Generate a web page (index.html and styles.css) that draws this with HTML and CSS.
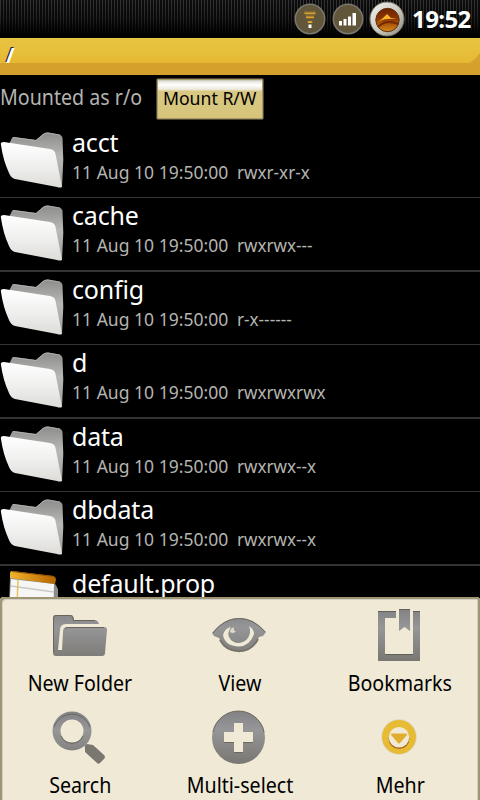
FILE: index.html
```
<!DOCTYPE html>
<html lang="en">
<head>
  <meta charset="UTF-8">
  <title>File Explorer</title>
  <meta name="viewport" content="width=device-width, initial-scale=1.0">
  <link rel="stylesheet" href="styles.css">
</head>
<body>
  <!-- shared icons and gradients -->
  <svg class="defs" width="0" height="0" aria-hidden="true">
    <defs>
      <linearGradient id="front" x1="0" y1="0" x2="0" y2="1">
        <stop offset="0" stop-color="#ffffff"/>
        <stop offset="0.5" stop-color="#f0f0ef"/>
        <stop offset="1" stop-color="#dddcd8"/>
      </linearGradient>
      <linearGradient id="back" x1="0" y1="0" x2="0" y2="1">
        <stop offset="0" stop-color="#8c8c8a"/>
        <stop offset="0.45" stop-color="#b8b8b5"/>
        <stop offset="1" stop-color="#a09f9a"/>
      </linearGradient>
      <linearGradient id="grey" gradientUnits="userSpaceOnUse" x1="0" y1="0" x2="0" y2="56">
        <stop offset="0" stop-color="#818183"/>
        <stop offset="0.35" stop-color="#969698"/>
        <stop offset="1" stop-color="#77756f"/>
      </linearGradient>
      <linearGradient id="orange" x1="0" y1="0" x2="1" y2="0">
        <stop offset="0" stop-color="#f2b42c"/>
        <stop offset="1" stop-color="#b56500"/>
      </linearGradient>
      <linearGradient id="silver" x1="0" y1="0" x2="1" y2="1">
        <stop offset="0" stop-color="#f4f4f2"/>
        <stop offset="0.55" stop-color="#cbc7bd"/>
        <stop offset="1" stop-color="#8b8678"/>
      </linearGradient>
      <linearGradient id="amber" x1="0" y1="0" x2="0" y2="1">
        <stop offset="0" stop-color="#6e2200"/>
        <stop offset="0.45" stop-color="#8c3500"/>
        <stop offset="1" stop-color="#d98a18"/>
      </linearGradient>
      <symbol id="folder" viewBox="0 0 64 64">
        <path d="M9 18L12 12Q12 11 14 11L36 14L43 8Q45 6 48 6.500L59 8.500Q62 9 62.500 12L63.300 34L62 61L20 50Z" fill="url(#back)"/>
        <path d="M13 11.500L36 14.500L43 8.500Q45 7 48 7L60 9" fill="none" stroke="#b5b5b3" stroke-width="0.800"/>
        <path d="M1 19Q0 16 4 16L50 23Q55 24 55.500 28L62 61Q60 62 57 61L15 53Q11 52 9 47Q3 34 1 19Z" fill="url(#front)"/>
      </symbol>
    </defs>
  </svg>

  <header class="statusbar">
    <svg class="wifi" width="32" height="32" viewBox="0 0 32 32">
      <circle cx="16" cy="16" r="14.700" fill="#61553a" stroke="#79776e" stroke-width="1.500"/>
      <path d="M10.500 10.300H21.500M12 14.300H20M13.700 19H18.300" fill="none" stroke="#d9a02e" stroke-width="2"/>
      <path d="M10.500 9H21.500M12 13H20" fill="none" stroke="#9c7a35"/>
      <rect x="14.500" y="21.500" width="3" height="3.500" fill="#fff"/>
    </svg>
    <svg class="signal" width="32" height="32" viewBox="0 0 32 32">
      <circle cx="16" cy="16" r="14.700" fill="#61553a" stroke="#79776e" stroke-width="1.500"/>
      <path d="M7 22.500V18H10V22.500ZM11.500 22.500V16H14.500V22.500ZM16 22.500V13.500H19V22.500ZM20.500 22.500V10H24V22.500Z" fill="#fff"/>
    </svg>
    <svg class="battery" width="36" height="36" viewBox="0 0 36 36">
      <circle cx="18" cy="18" r="17" fill="url(#silver)" stroke="#77746b"/>
      <circle cx="18.500" cy="19" r="11.700" fill="url(#amber)" stroke="#5c3415"/>
      <path d="M8 22L14 17L18 13L22 17H28Q23 18 19 18Q13 18 8 22Z" fill="#fbb52a"/>
      <path d="M9 26Q17 18 29 23" fill="none" stroke="#732a00" stroke-width="2"/>
    </svg>
    <span class="clock">19:52</span>
  </header>

  <div class="pathbar">
    <span class="path">/</span>
    <svg width="14" height="37" viewBox="0 0 14 37"><path d="M0 26Q8 24 14 15V37H0Z" fill="#d6a02d"/></svg>
  </div>

  <div class="mount">
    <span class="mount-state">Mounted as r/o</span>
    <button class="mount-button"><span>Mount R/W</span></button>
  </div>

  <ul class="files">
    <li>
      <svg class="icon"><use href="#folder"/></svg>
      <div><div class="name">acct</div><div class="info"><span class="date">11 Aug 10 19:50:00</span><span class="perms">rwxr-xr-x</span></div></div>
    </li>
    <li>
      <svg class="icon"><use href="#folder"/></svg>
      <div><div class="name">cache</div><div class="info"><span class="date">11 Aug 10 19:50:00</span><span class="perms">rwxrwx---</span></div></div>
    </li>
    <li>
      <svg class="icon"><use href="#folder"/></svg>
      <div><div class="name">config</div><div class="info"><span class="date">11 Aug 10 19:50:00</span><span class="perms">r-x------</span></div></div>
    </li>
    <li>
      <svg class="icon"><use href="#folder"/></svg>
      <div><div class="name">d</div><div class="info"><span class="date">11 Aug 10 19:50:00</span><span class="perms">rwxrwxrwx</span></div></div>
    </li>
    <li>
      <svg class="icon"><use href="#folder"/></svg>
      <div><div class="name">data</div><div class="info"><span class="date">11 Aug 10 19:50:00</span><span class="perms">rwxrwx--x</span></div></div>
    </li>
    <li>
      <svg class="icon"><use href="#folder"/></svg>
      <div><div class="name">dbdata</div><div class="info"><span class="date">11 Aug 10 19:50:00</span><span class="perms">rwxrwx--x</span></div></div>
    </li>
    <li>
      <svg class="icon" viewBox="0 0 64 64">
        <path d="M10 10L54 15L58 22V64H8Z" fill="#8b8b89"/>
        <path d="M11 12L54 17L53 64H8Z" fill="#f6f6f4"/>
        <path d="M12 4L53 9Q56 10 56 13L55 17L10 11V7Q10 4 12 4Z" fill="url(#orange)"/>
        <path d="M12 4.500L54 9.500" stroke="#9a5600"/>
        <path d="M11 19L54 25" stroke="#c9c9c9" stroke-width="1.300"/>
        <path d="M18 13L16 64" stroke="#e8c35c" stroke-width="1.500"/>
      </svg>
      <div><div class="name">default.prop</div></div>
    </li>
  </ul>

  <nav class="menu">
    <a class="item">
      <svg width="56" height="56" viewBox="0 0 56 56">
        <path d="M1 10Q1 7 3 7H19Q21 7 21.500 9L22 12H43Q46 12.500 47 16H14Q8 16 8 22L6 42H10L11 24Q11 19 15 19H52Q55 19 55 22L53 45Q53 48 50 48H4Q1 48 1 45Z" fill="url(#grey)"/>
        <path d="M1.500 44V10Q2 7.500 4 7.500H19Q21 8 21.500 12.500H43M13 21Q14 19.500 16 19.500H52" fill="none" stroke="#69655c"/>
      </svg>
      <span>New Folder</span>
    </a>
    <a class="item">
      <svg width="56" height="56" viewBox="0 0 56 56">
        <path d="M0 25Q12 10 27 10Q42 10 54 24L51 28L47 29Q41 44 27 44Q13 43 7 30L2 28Z" fill="url(#grey)"/>
        <path d="M8 32Q14 43 27 43.300Q40 43 46 31" fill="none" stroke="#78756d" stroke-width="2"/>
        <path d="M11 27Q13 20 19 19Q15 25 17 29Q20 35 27 35Q36 34 38 25Q38.500 21 37 18Q42 21 42 26Q38 38 27 38.500Q13 38 11 27Z" fill="#efe9d5"/>
        <path d="M18 24Q18 20 22 19.500Q21 23 24 23.500Q21 26 18 24Z" fill="#dedacb"/>
        <path d="M1 25Q12 10.500 27 10.500Q42 10.500 53 24" fill="none" stroke="#6d6960"/>
      </svg>
      <span>View</span>
    </a>
    <a class="item">
      <svg width="56" height="56" viewBox="0 0 56 56">
        <path d="M6 3H24V10H13V46H41V3H48V53H6Z" fill="url(#grey)"/>
        <path d="M27 1H38V23L32.500 19L27 23Z" fill="url(#grey)"/>
        <path d="M6 3.500H24M41 3.500H48M27 1.500H38M13 46.500H41" fill="none" stroke="#625f58"/>
      </svg>
      <span>Bookmarks</span>
    </a>
    <a class="item">
      <svg width="56" height="56" viewBox="0 0 56 56">
        <circle cx="20" cy="21" r="15.500" fill="none" stroke="url(#grey)" stroke-width="8"/>
        <path d="M2 17A19 19 0 0 1 38 17M9 26A12 12 0 0 0 31 26" fill="none" stroke="#6c685f"/>
        <path d="M33 38Q32 35 35 34L41 35L52 45Q54 47 52 49L48 53Q46 55 44 52L33 42Z" fill="#79776f"/>
      </svg>
      <span>Search</span>
    </a>
    <a class="item">
      <svg width="56" height="56" viewBox="0 0 56 56">
        <circle cx="26.500" cy="27.500" r="26.500" fill="url(#grey)"/>
        <path d="M1 22A26 26 0 0 1 52 22" fill="none" stroke="#6c685f"/>
        <path d="M22 13H31V22H41V32H31V42H22V32H12V22H22Z" fill="#efe9d5"/>
        <path d="M12 32.500H22M31 32.500H41M22 42.500H31" stroke="#6c685f"/>
      </svg>
      <span>Multi-select</span>
    </a>
    <a class="item">
      <svg width="56" height="56" viewBox="0 0 56 56">
        <circle cx="27" cy="27" r="17.700" fill="#d8d6cb"/>
        <circle cx="27" cy="27" r="17" fill="#e7bb34"/>
        <circle cx="27" cy="28.500" r="10.500" fill="#a9681a"/>
        <circle cx="27" cy="27.300" r="10.300" fill="#efe9d5"/>
        <path d="M19.500 23.500H34.500Q35.500 24 34.500 25.500L28 33Q27 34 26 33L19.500 25.500Q18.500 24 19.500 23.500Z" fill="#e3ad2c"/>
      </svg>
      <span>Mehr</span>
    </a>
  </nav>
</body>
</html>
```
FILE: styles.css
```
* {
  box-sizing: border-box;
}
body {
  margin: 0;
  width: 480px;
  height: 800px;
  overflow: hidden;
  display: flex;
  flex-direction: column;
  background: #000;
  color: #fff;
  font-family: 'Noto Sans', 'Open Sans', sans-serif;
}
svg {
  display: block;
  flex: none;
}
.defs {
  position: absolute;
}
.statusbar {
  height: 38px;
  flex: none;
  display: flex;
  justify-content: flex-end;
  align-items: center;
  padding-right: 8px;
  background: linear-gradient(rgba(0,0,0,0) 0%, rgba(0,0,0,0.35) 50%, #000 95%),
    repeating-linear-gradient(90deg, #353535 0 1px, #0c0c0c 1px 3px);
}
.wifi {
  margin-right: 6px;
}
.signal {
  margin-right: 5px;
}
.clock {
  width: 60px;
  margin-left: 7px;
  font-size: 24px;
  font-weight: 700;
  line-height: 38px;
  letter-spacing: -0.6px;
  white-space: nowrap;
}
.pathbar {
  height: 37px;
  flex: none;
  display: flex;
  justify-content: space-between;
  padding-left: 6px;
  background: linear-gradient(#e7c341 0, #e7c03c 12px, #e6b832 25px, #d6a02d 25px);
}
.path {
  font-size: 21px;
  font-weight: 700;
  line-height: 34px;
  text-shadow: -1px -1px 0 #222;
}
.mount {
  height: 50px;
  flex: none;
  display: flex;
  align-items: flex-start;
  justify-content: flex-start;
}
.mount-state {
  width: 156px;
  font-size: 21px;
  line-height: 44px;
  color: #b4b4b0;
  white-space: nowrap;
  transform: scaleX(0.935);
  transform-origin: 0 0;
}
.mount-button {
  width: 108px;
  height: 42px;
  margin: 3px 0 0;
  padding: 0 0 2px;
  border: 1px solid #4c4636;
  border-radius: 2px;
  background: linear-gradient(#b9b39d 0, #eeece3 3px, #fff 6px, #e8e3d2 11px, #d8c882 12px, #d6c47a 100%);
  box-shadow: inset 0 0 0 1px #a99b67;
  color: #000;
  font-family: inherit;
  font-size: 18px;
  white-space: nowrap;
}
.mount-button span {
  display: inline-block;
  transform: scaleX(0.98);
}
.files {
  flex: none;
  height: 472px;
  margin: 0;
  padding: 0;
  list-style: none;
  overflow: hidden;
}
.files li {
  height: 73px;
  display: flex;
  gap: 8px;
  border-bottom: 1px solid #333;
}
.files li:nth-child(even) {
  height: 74px;
  border-bottom-width: 2px;
}
.icon {
  width: 64px;
  height: 64px;
  margin-top: 1px;
}
.name {
  height: 36px;
  font-size: 25px;
  line-height: 35px;
  letter-spacing: -0.2px;
  white-space: nowrap;
}
.info {
  display: flex;
  font-size: 18px;
  line-height: 22px;
  color: #b4b4b0;
  white-space: nowrap;
}
.date {
  width: 165px;
  transform: scaleX(0.975);
  transform-origin: 0 0;
}
.perms {
  transform: scaleX(0.95);
  transform-origin: 0 0;
}
.menu {
  flex: none;
  height: 203px;
  display: grid;
  grid-template-columns: repeat(3, 160px);
  grid-auto-rows: 102px;
  padding-top: 2px;
  background: #efe9d5;
  border-radius: 4px 4px 0 0;
  overflow: hidden;
  box-shadow: inset 2px 2px 0 #a09472, inset -2px 0 0 #a09472, inset 3px 3px 0 #d3d0c6, inset -3px 0 0 #d3d0c6;
}
.item {
  padding-top: 9px;
  display: flex;
  flex-direction: column;
  align-items: center;
  color: #000;
  font-size: 21px;
  line-height: 30px;
  white-space: nowrap;
}
.item span {
  margin-top: 4px;
  transform: scaleX(0.935);
}
```
